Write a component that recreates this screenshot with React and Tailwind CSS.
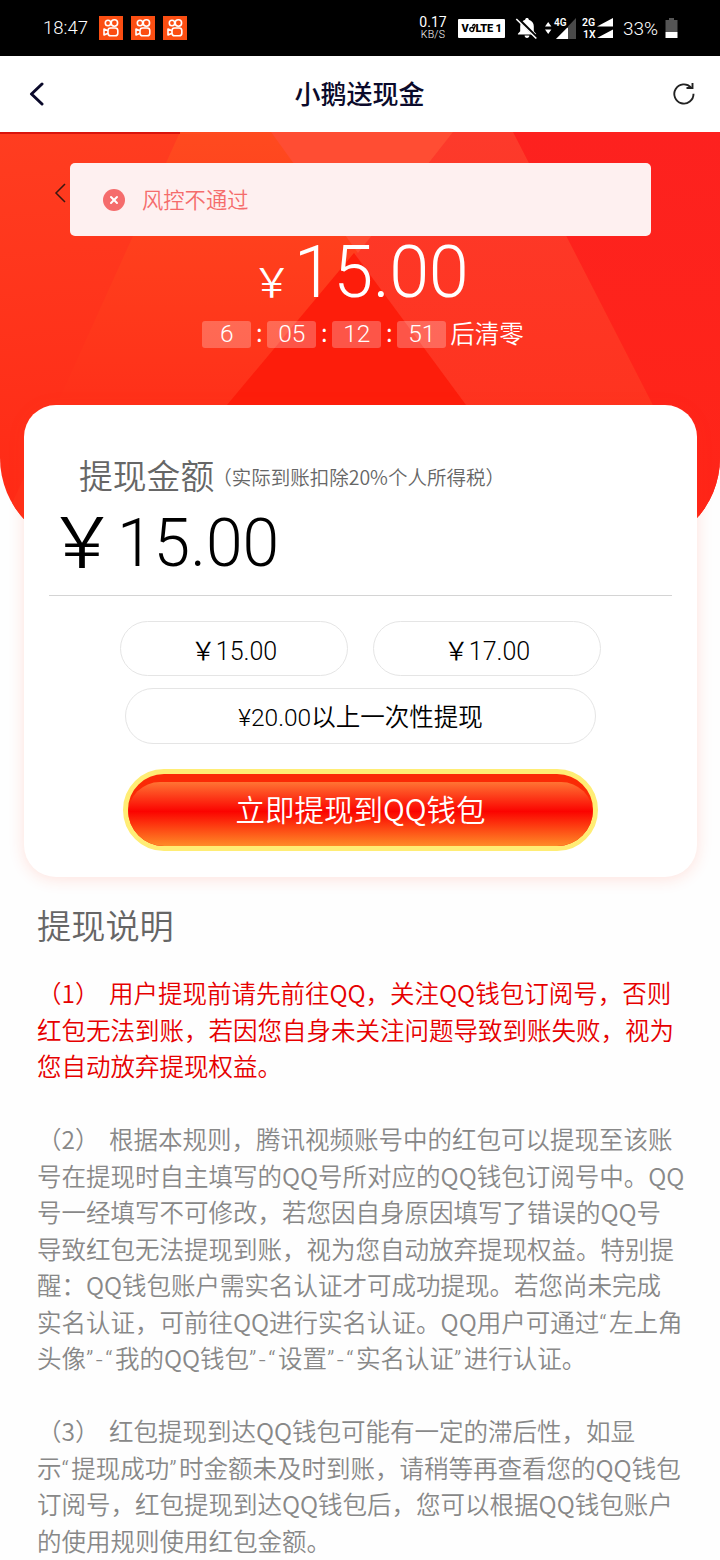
import { X } from 'lucide-react';

const countdown = ['6', '05', '12', '51'];

const rules = [
  {
    color: 'text-[#e60000]',
    lines: [
      '（1） 用户提现前请先前往QQ，关注QQ钱包订阅号，否则',
      '红包无法到账，若因您自身未关注问题导致到账失败，视为',
      '您自动放弃提现权益。',
    ],
  },
  {
    color: 'text-[#888888]',
    lines: [
      '（2） 根据本规则，腾讯视频账号中的红包可以提现至该账',
      '号在提现时自主填写的QQ号所对应的QQ钱包订阅号中。QQ',
      '号一经填写不可修改，若您因自身原因填写了错误的QQ号',
      '导致红包无法提现到账，视为您自动放弃提现权益。特别提',
      '醒：QQ钱包账户需实名认证才可成功提现。若您尚未完成',
      '实名认证，可前往QQ进行实名认证。QQ用户可通过“左上角',
      '头像”-“我的QQ钱包”-“设置”-“实名认证”进行认证。',
    ],
  },
  {
    color: 'text-[#888888]',
    lines: [
      '（3） 红包提现到达QQ钱包可能有一定的滞后性，如显',
      '示“提现成功”时金额未及时到账，请稍等再查看您的QQ钱包',
      '订阅号，红包提现到达QQ钱包后，您可以根据QQ钱包账户',
      '的使用规则使用红包金额。',
    ],
  },
];

function VideoAppIcon() {
  return (
    <svg className="h-6 w-6" viewBox="0 0 24 24" fill="none" stroke="#fff" strokeWidth="1.6">
      <rect width="24" height="24" fill="#fb4e12" stroke="none" />
      <circle cx="9" cy="7" r="2.7" />
      <circle cx="15.4" cy="7" r="3.2" />
      <rect x="9" y="12" width="9.8" height="7.8" rx="2.6" />
      <path d="M9 14.800 5 13v6l4-1.800" strokeLinejoin="round" />
    </svg>
  );
}

function StatusBar() {
  return (
    <div className="flex h-14 items-center bg-black pl-[43px] pr-[42px] font-[Roboto,'Noto_Sans_CJK_SC',sans-serif] text-white">
      <span className="w-[56px] text-[18.5px] leading-none">18:47</span>
      <div className="flex gap-2">
        <VideoAppIcon />
        <VideoAppIcon />
        <VideoAppIcon />
      </div>
      <div className="ml-auto flex items-center">
        <div className="w-[30px] whitespace-nowrap text-center">
          <p className="text-[14px] font-normal leading-[13px]">0.17</p>
          <p className="text-[10.500px] leading-[11px] tracking-[0.2px]">KB/S</p>
        </div>
        <div className="ml-[10px] flex h-[19px] w-[47px] items-center justify-center rounded-[1px] bg-white text-[11px] font-black leading-none tracking-[-0.2px] text-black">
          <span>V</span>
          <svg className="h-[10px] w-[7px]" viewBox="0 0 7 10" fill="none" stroke="#000" strokeWidth="1.300">
            <circle cx="2.800" cy="6.500" r="2" />
            <path d="M3.500 3.500C4 1 6 1 6.200 2.500S4.800 4.500 4.800 6" />
          </svg>
          <span className="whitespace-pre">LTE 1</span>
        </div>
        <svg className="ml-[10px] h-6 w-[24px]" viewBox="0 0 24 24">
          <path
            d="M12 2c1.100 0 1.800.700 1.800 1.700 3.200.8 5 3.400 5 6.500v5.100l2.300 2.400v.9H2.900v-.9l2.300-2.400v-5.100c0-3.100 1.800-5.700 5-6.500C10.200 2.700 10.900 2 12 2ZM9.600 19.600h4.800c0 1.500-1 2.400-2.400 2.400s-2.400-.9-2.400-2.400Z"
            fill="#fff"
          />
          <path d="m2.600 2.400 20 20" stroke="#000" strokeWidth="3" />
          <path d="m1.300 3 20 19.500" stroke="#fff" strokeWidth="1.600" />
        </svg>
        <svg className="ml-[6px] h-6 w-[32px]" viewBox="0 0 32 24">
          <path d="m0 10.500 3.200-4.500 3.200 4.500ZM0 13.500l3.200 4.500 3.200-4.500Z" fill="#fff" />
          <path d="M31 2v21H11Z" fill="#4a4a4a" />
          <path d="M23 11v12H11Z" fill="#fff" />
          <rect x="9" y="1" width="14" height="10.500" fill="#000" />
          <text x="9" y="9.500" fill="#fff" fontSize="10" fontWeight="600">4G</text>
        </svg>
        <svg className="ml-[5px] h-6 w-[32px]" viewBox="0 0 32 24">
          <path d="M31 2v8.500H15ZM31 13.500V22H15Z" fill="#fff" />
          <text x="0" y="10" fill="#fff" fontSize="10.500" fontWeight="600">2G</text>
          <text x="1" y="22" fill="#fff" fontSize="10.500" fontWeight="600">1X</text>
        </svg>
        <span className="ml-[9px] w-[38px] text-[19px] leading-none">33%</span>
        <svg className="ml-[4px] h-5 w-[13px]" viewBox="0 0 13 20">
          <path d="M4 0h5v2h3.500v12H.500V2H4Z" fill="#555" />
          <path d="M.500 14h12v6H.500Z" fill="#fff" />
        </svg>
      </div>
    </div>
  );
}

function NavBar() {
  return (
    <div className="flex h-[76px] items-center justify-between bg-white pl-[29px] pr-6">
      <svg className="h-6 w-4" viewBox="0 0 16 24" fill="none" stroke="#0b0a2b" strokeWidth="3" strokeLinecap="round" strokeLinejoin="round">
        <path d="M13 2 2.500 12 13 22" />
      </svg>
      <h1 className="pb-[2px] pl-[2px] text-[26px] font-medium leading-none text-[#0b0a2b]">小鹅送现金</h1>
      <svg className="h-6 w-6" viewBox="0 0 24 24" fill="none" stroke="#222" strokeWidth="1.900">
        <path d="M21.500 11.800A9.600 9.600 0 1 1 19 5.500" />
        <path d="M14.500 6h6V1" />
      </svg>
    </div>
  );
}

function HeroBackdrop() {
  return (
    <svg className="absolute inset-0 h-full w-full" viewBox="0 0 720 416" preserveAspectRatio="none">
      <defs>
        <linearGradient id="base" x1="0" y1="0" x2="0.1" y2="1">
          <stop offset="0" stopColor="#ff3d20" />
          <stop offset="1" stopColor="#ff2815" />
        </linearGradient>
        <linearGradient id="band" x1="0" y1="0" x2="0" y2="1">
          <stop offset="0" stopColor="#ff4a1f" />
          <stop offset="0.650" stopColor="#ff3019" />
        </linearGradient>
        <linearGradient id="bandRight" x1="0" y1="0" x2="0" y2="1">
          <stop offset="0" stopColor="#fd3a2b" />
          <stop offset="1" stopColor="#ff3019" />
        </linearGradient>
        <linearGradient id="right" x1="0" y1="0" x2="0" y2="1">
          <stop offset="0" stopColor="#fd211f" />
          <stop offset="1" stopColor="#ff2617" />
        </linearGradient>
      </defs>
      <rect width="720" height="416" fill="url(#base)" />
      <path d="M180 0H362V416H-8Z" fill="url(#band)" />
      <path d="M453 0h60l213 416H260L360 110Z" fill="url(#bandRight)" />
      <path d="M513 0h207v416h-8L653 273Z" fill="url(#right)" />
      <path d="M271 0h182l-95 121Z" fill="#ff4d33" />
      <path d="m354 121 112 152H227Z" fill="#fd1d0b" />
      <rect width="180" height="2" fill="#d9140c" />
    </svg>
  );
}

function Toast() {
  return (
    <div className="absolute left-[70px] top-[31px] flex h-[73px] w-[581px] items-center rounded-[5px] bg-[#fef0f0] pl-[33px] text-[#f56c6c]">
      <span className="flex h-[22px] w-[22px] items-center justify-center rounded-full bg-[#f56c6c]">
        <X className="h-3 w-3 text-white" strokeWidth={4} />
      </span>
      <span className="ml-[17px] pb-[2px] text-[21.3px] leading-none">风控不通过</span>
    </div>
  );
}

function Hero() {
  return (
    <header className="relative h-[416px] overflow-hidden rounded-b-[90px] text-white">
      <HeroBackdrop />
      <div className="relative flex flex-col items-center">
        <div className="flex h-[176px] items-end leading-none">
          <span className="mb-[8px] mr-[2px] text-[40px]">￥</span>
          <span className="-mb-px font-[Roboto,sans-serif] text-[72px] tracking-[-0.5px]">15.00</span>
        </div>
        <div className="mt-3 flex items-center pl-[6px] text-[24.5px] leading-none">
          {countdown.map((value, i) => (
            <div key={i} className="flex items-center">
              {i > 0 && <span className="w-4 pb-1 text-center">:</span>}
              <span className="flex h-[27px] w-[49px] items-center justify-center rounded-[3px] bg-white/25 pb-px font-[Roboto,sans-serif]">{value}</span>
            </div>
          ))}
          <span className="ml-1 pb-[2px]">后清零</span>
        </div>
      </div>
      <svg className="absolute left-[54px] top-[51px] h-5 w-3" viewBox="0 0 12 20" fill="none" stroke="#3a1710" strokeWidth="1.500">
        <path d="M11 1 2 10l9 9" />
      </svg>
      <Toast />
    </header>
  );
}

function WithdrawCard() {
  return (
    <section className="relative ml-[24px] -mt-[143px] h-[472px] w-[673px] rounded-[32px] bg-white px-[25px] shadow-[0_2px_16px_rgba(255,60,30,0.15)]">
      <div className="flex h-[100px] items-end pl-[30px] leading-none text-[#666666]">
        <h2 className="mb-[13px] text-[33.800px]">提现金额</h2>
        <span className="-ml-[2px] mb-[19px] text-[19.500px]">（实际到账扣除20%个人所得税）</span>
      </div>
      <div className="flex h-[91px] border-b border-[#d4d4d4] font-[Roboto,'Noto_Sans_CJK_SC',sans-serif] leading-[78px] text-black">
        <span className="-ml-[2px] text-[70px]">￥</span>
        <span className="text-[66px]">15.00</span>
      </div>
      <div className="mt-[25px] flex flex-col items-center text-[25px] text-black">
        <div className="flex gap-[25px] font-[Roboto,'Noto_Sans_CJK_SC',sans-serif]">
          <button className="h-[55px] w-[228px] rounded-full border border-[#e5e5e5] pt-[5px] leading-none">￥15.00</button>
          <button className="h-[55px] w-[228px] rounded-full border border-[#e5e5e5] pt-[5px] leading-none">￥17.00</button>
        </div>
        <button className="mt-3 h-[56px] w-[471px] rounded-full border border-[#e5e5e5] pt-[5px] font-[Roboto,'Noto_Sans_CJK_SC',sans-serif] text-[24.500px] leading-none">
          ¥20.00以上一次性提现
        </button>
        <button className="relative mt-[25px] h-[82px] w-[475px] overflow-hidden rounded-full border-[5px] border-[#ffed75] bg-[#fa2a06] text-[29.500px] leading-none text-white">
          <span className="absolute inset-x-0 bottom-0 top-[8px] flex items-center justify-center rounded-full bg-[linear-gradient(180deg,#ff7433_0%,#fb0300_46%,#ff8b27_100%)] pb-[11px]">
            立即提现到QQ钱包
          </span>
        </button>
      </div>
    </section>
  );
}

// Curly quotes and hyphens keep their narrow Latin widths inside Chinese text
function RuleLine({ text }) {
  return (
    <span className="block h-[36.500px] whitespace-nowrap [word-spacing:4px]">
      {text.split(/([“”-]+)/).map((part, i) =>
        i % 2 ? (
          <span key={i} className="font-[Roboto,sans-serif] leading-none tracking-[2.4px]">{part}</span>
        ) : (
          part
        )
      )}
    </span>
  );
}

function Rules() {
  return (
    <section className="px-[37px] pt-[29px]">
      <h2 className="text-[34.200px] leading-[36px] text-[#666666]">提现说明</h2>
      <div className="mt-[33px] flex flex-col gap-[36.500px] text-[24.500px] leading-[36.500px]">
        {rules.map((rule, i) => (
          <p key={i} className={rule.color}>
            {rule.lines.map((line) => (
              <RuleLine key={line} text={line} />
            ))}
          </p>
        ))}
      </div>
    </section>
  );
}

export default function App() {
  return (
    <div lang="zh-CN" className="h-[1560px] w-[720px] overflow-hidden bg-[#fefefe] font-['Noto_Sans_CJK_SC',sans-serif] font-[350]">
      <StatusBar />
      <NavBar />
      <Hero />
      <WithdrawCard />
      <Rules />
    </div>
  );
}
